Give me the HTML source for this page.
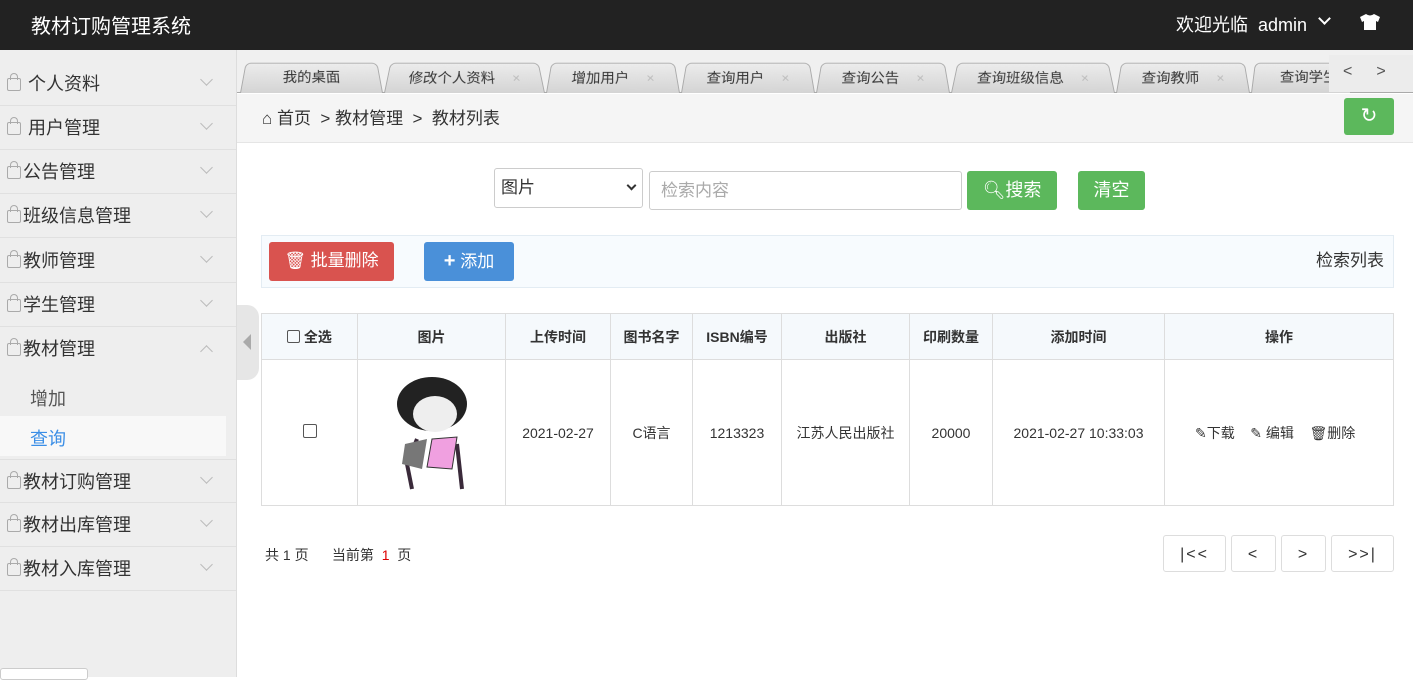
<!DOCTYPE html>
<html><head><meta charset="utf-8"><style>
*{margin:0;padding:0;box-sizing:border-box}
body{width:1413px;height:677px;overflow:hidden;font-family:"Liberation Sans","Noto Sans CJK SC",sans-serif;background:#fff;position:relative;color:#333}
.abs{position:absolute}
#hd{left:0;top:0;width:1413px;height:50px;background:#222;color:#fff}
#side{left:0;top:50px;width:237px;height:627px;background:#eee;border-right:1px solid #ddd}
.mi{position:absolute;left:0;width:236px;height:44px;border-bottom:1px solid #e0e0e0;font-size:18px;color:#333;line-height:44px}
.mi .lk{position:absolute;left:7px;top:16px;width:14px;height:13px;border:1.5px solid #aaa;border-radius:2px}
.mi .lk:before{content:"";position:absolute;left:2px;top:-6px;width:6px;height:6px;border:1.5px solid #aaa;border-bottom:none;border-radius:4px 4px 0 0}
.mi .ar{position:absolute;left:202px;top:13px;width:9px;height:9px;border-right:1.5px solid #bbb;border-bottom:1.5px solid #bbb;transform:rotate(45deg)}
.tab{position:absolute;top:60px;height:33px;background:linear-gradient(#ececec,#d4d4d4);border:1px solid #aaa;border-bottom:none;border-radius:6px 6px 0 0;font-size:15px;color:#333;text-align:center;line-height:32px;transform:perspective(40px) rotateX(6deg);transform-origin:bottom}
.tx{color:#bbb;font-size:14px;margin-left:18px}
th,td{border:1px solid #ddd;text-align:center;font-size:14px}
th{background:#f5f9fc;height:46px;font-weight:bold}
td{height:146px}
.pb{position:absolute;top:535px;height:37px;border:1px solid #ddd;border-radius:3px;font-size:16px;text-align:center;line-height:37px;letter-spacing:2px}
</style></head><body>
<div id="hd" class="abs">
<div class="abs" style="left:31px;top:10px;font-size:20px">教材订购管理系统</div>
<div class="abs" style="left:1176px;top:11px;font-size:18px">欢迎光临 &nbsp;admin</div>
<div class="abs" style="left:1320px;top:14px;width:9px;height:9px;border-right:2px solid #fff;border-bottom:2px solid #fff;transform:rotate(45deg)"></div>
<svg class="abs" style="left:1359px;top:13px" width="22" height="18" viewBox="0 0 22 18"><path d="M7 1 L1 4 L3 9 L5 8 L5 17 L17 17 L17 8 L19 9 L21 4 L15 1 Q11 4 7 1Z" fill="#fff"/></svg>
</div>
<div id="side" class="abs"></div>
<div class="mi" style="top:62px"><span class="lk"></span><span style="margin-left:28px">个人资料</span><span class="ar"></span></div>
<div class="mi" style="top:106px"><span class="lk"></span><span style="margin-left:28px">用户管理</span><span class="ar"></span></div>
<div class="mi" style="top:150px"><span class="lk"></span><span style="margin-left:23px">公告管理</span><span class="ar"></span></div>
<div class="mi" style="top:194px"><span class="lk"></span><span style="margin-left:23px">班级信息管理</span><span class="ar"></span></div>
<div class="mi" style="top:239px"><span class="lk"></span><span style="margin-left:23px">教师管理</span><span class="ar"></span></div>
<div class="mi" style="top:283px"><span class="lk"></span><span style="margin-left:23px">学生管理</span><span class="ar"></span></div>
<div class="mi" style="top:327px;border-bottom:none"><span class="lk"></span><span style="margin-left:23px">教材管理</span><span class="ar" style="transform:rotate(225deg);top:20px"></span></div>
<div class="abs" style="left:30px;top:385px;font-size:18px;color:#555">增加</div>
<div class="abs" style="left:0;top:416px;width:226px;height:40px;background:#f8f8f8"></div>
<div class="abs" style="left:30px;top:425px;font-size:18px;color:#3a8ee6">查询</div>
<div class="mi" style="top:459px;border-top:1px solid #e0e0e0"><span class="lk"></span><span style="margin-left:23px">教材订购管理</span><span class="ar"></span></div>
<div class="mi" style="top:503px"><span class="lk"></span><span style="margin-left:23px">教材出库管理</span><span class="ar"></span></div>
<div class="mi" style="top:547px"><span class="lk"></span><span style="margin-left:23px">教材入库管理</span><span class="ar"></span></div>
<div class="abs" style="left:0;top:668px;width:88px;height:12px;border:1px solid #ccc;border-radius:3px;background:#fff"></div>
<div class="abs" style="left:237px;top:305px;width:22px;height:75px;background:#e6e6e6;border-radius:0 12px 12px 0"></div>
<div class="abs" style="left:243px;top:334px;width:0;height:0;border-right:8px solid #aaa;border-top:8px solid transparent;border-bottom:8px solid transparent"></div>

<div class="abs" style="left:237px;top:50px;width:1176px;height:43px;background:#f0f0f0;border-bottom:1px solid #aaa"></div>
<div class="tab" style="left:240px;width:143px">我的桌面</div>
<div class="tab" style="left:384px;width:161px">修改个人资料<span class="tx">×</span></div>
<div class="tab" style="left:546px;width:134px">增加用户<span class="tx">×</span></div>
<div class="tab" style="left:681px;width:134px">查询用户<span class="tx">×</span></div>
<div class="tab" style="left:816px;width:134px">查询公告<span class="tx">×</span></div>
<div class="tab" style="left:951px;width:164px">查询班级信息<span class="tx">×</span></div>
<div class="tab" style="left:1116px;width:134px">查询教师<span class="tx">×</span></div>
<div class="tab" style="left:1251px;width:100px;text-align:left;padding-left:27px">查询学生</div>
<div class="abs" style="left:1329px;top:55px;width:84px;height:37px;background:#ececec;font-size:16px;color:#555;line-height:34px"><span style="margin-left:14px">&lt;</span><span style="margin-left:24px">&gt;</span></div>

<div class="abs" style="left:237px;top:94px;width:1176px;height:49px;background:#f5f5f5;border-bottom:1px solid #e5e5e5"></div>
<div class="abs" style="left:262px;top:104px;font-size:17px;color:#333">⌂ 首页 &nbsp;&gt; 教材管理 &nbsp;&gt; &nbsp;教材列表</div>
<div class="abs" style="left:1344px;top:98px;width:50px;height:37px;background:#5cb85c;border-radius:3px;color:#fff;text-align:center;line-height:36px;font-size:20px">↻</div>

<div class="abs" style="left:494px;top:168px;width:149px;height:40px;border:1px solid #ccc;border-radius:3px;font-size:17px;line-height:38px;padding-left:6px">图片<span style="position:absolute;right:7px;top:13px;width:7px;height:7px;border-right:2px solid #333;border-bottom:2px solid #333;transform:rotate(45deg)"></span></div>
<div class="abs" style="left:649px;top:171px;width:313px;height:39px;border:1px solid #ccc;border-radius:3px;font-size:17px;color:#aaa;line-height:37px;padding-left:11px">检索内容</div>
<div class="abs" style="left:967px;top:171px;width:90px;height:39px;background:#5cb85c;border-radius:3px;color:#fff;font-size:18px;text-align:center;line-height:38px">🔍︎搜索</div>
<div class="abs" style="left:1078px;top:171px;width:67px;height:39px;background:#5cb85c;border-radius:3px;color:#fff;font-size:18px;text-align:center;line-height:38px">清空</div>

<div class="abs" style="left:261px;top:235px;width:1133px;height:53px;background:#f7fbfe;border:1px solid #e3ecf3"></div>
<div class="abs" style="left:269px;top:242px;width:125px;height:39px;background:#d9534f;border-radius:3px;color:#fff;font-size:17px;text-align:center;line-height:38px">🗑 批量删除</div>
<div class="abs" style="left:424px;top:242px;width:90px;height:39px;background:#4a90d9;border-radius:3px;color:#fff;font-size:17px;text-align:center;line-height:38px"><b style="font-size:20px">+</b> 添加</div>
<div class="abs" style="left:1316px;top:246px;font-size:17px">检索列表</div>

<table class="abs" style="left:261px;top:313px;width:1133px;border-collapse:collapse">
<tr><th style="width:96px"><span style="display:inline-block;width:13px;height:13px;border:1px solid #555;border-radius:2px;vertical-align:-1px"></span> 全选</th><th style="width:148px">图片</th><th style="width:105px">上传时间</th><th style="width:82px">图书名字</th><th style="width:89px">ISBN编号</th><th style="width:128px">出版社</th><th style="width:83px">印刷数量</th><th style="width:172px">添加时间</th><th>操作</th></tr>
<tr><td><span style="display:inline-block;width:14px;height:14px;border:1px solid #555;border-radius:2px"></span></td>
<td><svg width="90" height="125" viewBox="0 0 90 125"><ellipse cx="45" cy="35" rx="35" ry="27" fill="#222"/><ellipse cx="48" cy="45" rx="22" ry="18" fill="#eee"/><path d="M30 70 L20 95 L25 120 M70 75 L75 120" stroke="#3a2a3a" stroke-width="4" fill="none"/><path d="M45 70 L70 68 L65 100 L40 98Z" fill="#f0a0e0" stroke="#333"/><path d="M18 75 L40 70 L35 100 L15 95Z" fill="#777"/></svg></td>
<td>2021-02-27</td><td>C语言</td><td>1213323</td><td>江苏人民出版社</td><td>20000</td><td>2021-02-27 10:33:03</td><td style="text-align:left;padding-left:30px">✎下载 &nbsp; &nbsp;✎ 编辑 &nbsp; &nbsp;🗑︎删除</td></tr>
</table>

<div class="abs" style="left:265px;top:545px;font-size:14px">共 1 页 &nbsp; &nbsp; &nbsp;当前第 &nbsp;<span style="color:#d00">1</span> &nbsp;页</div>
<div class="pb" style="left:1163px;width:63px">|&lt;&lt;</div>
<div class="pb" style="left:1231px;width:45px">&lt;</div>
<div class="pb" style="left:1281px;width:45px">&gt;</div>
<div class="pb" style="left:1331px;width:63px">&gt;&gt;|</div>
</body></html>
